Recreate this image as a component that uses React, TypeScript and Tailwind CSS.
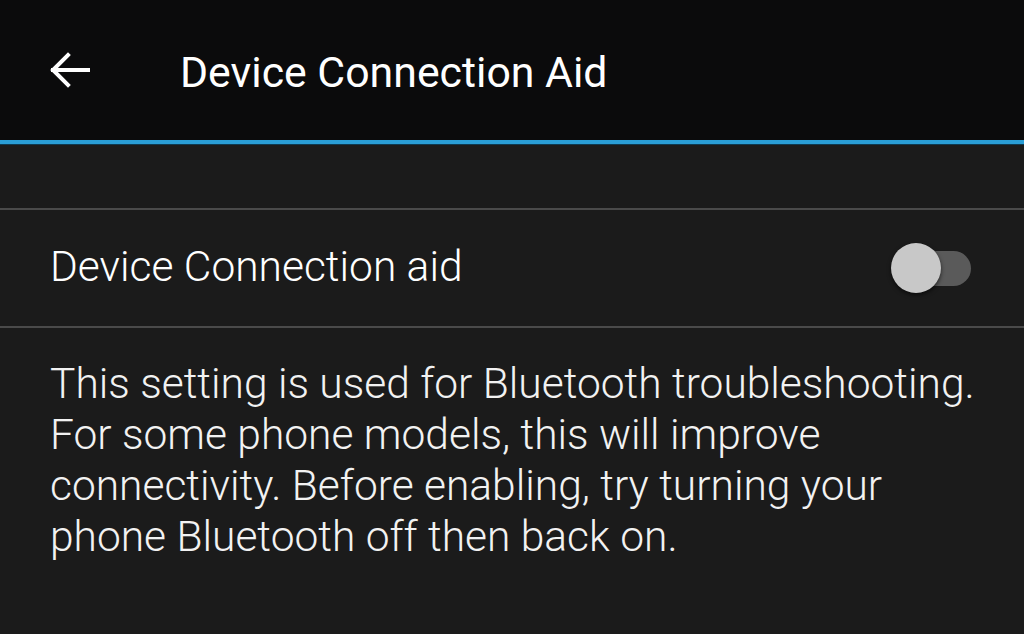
import React, { useState } from 'react';

const App: React.FC = () => {
  const [enabled, setEnabled] = useState(false);

  return (
    <div
      className="w-[1024px] h-[634px] bg-[#1b1b1b] text-white overflow-hidden"
      style={{ fontFamily: 'Roboto, "Noto Sans", sans-serif' }}
    >
      {/* Header */}
      <div className="h-[140px] bg-[#0b0b0c] flex items-center">
        <div className="w-[180px] flex items-center pl-[48px]">
          <svg width="44" height="40" viewBox="0 0 44 40" fill="none" stroke="#ffffff" strokeWidth="4" strokeLinecap="square">
            <path d="M5 20 H40" />
            <path d="M20 5 L5 20 L20 35" />
          </svg>
        </div>
        <h1 className="text-[42.8px] leading-none font-normal pt-[4px]">Device Connection Aid</h1>
      </div>
      <div className="h-[5px] bg-[#2a9ed6] border-b border-[#0f3a50]" />

      {/* Spacer section */}
      <div className="h-[63px]" />
      <div className="h-[2px] bg-[#4a4a4a]" />

      {/* Toggle row */}
      <div className="h-[116px] flex items-center justify-between pl-[50px] pr-[53px]">
        <span className="text-[42.5px] font-light leading-none pb-[2px]">Device Connection aid</span>
        <button
          onClick={() => setEnabled(!enabled)}
          className="relative w-[80px] h-[50px] flex items-center"
        >
          <span className={`absolute right-0 w-[64px] h-[35px] rounded-full ${enabled ? 'bg-[#1f6f96]' : 'bg-[#5a5a5a]'}`} />
          <span
            className={`absolute w-[50px] h-[50px] rounded-full shadow-[0_2px_4px_rgba(0,0,0,0.6)] ${enabled ? 'right-0 bg-[#2a9ed6]' : 'left-0 bg-[#c8c8c8]'}`}
          />
        </button>
      </div>
      <div className="h-[2px] bg-[#4a4a4a]" />

      {/* Description */}
      <p className="pl-[50px] pr-[20px] pt-[30px] text-[42.5px] font-light leading-[51px] text-[#f2f2f2]">
        This setting is used for Bluetooth troubleshooting. For some phone models, this will improve connectivity. Before enabling, try turning your phone Bluetooth off then back on.
      </p>
    </div>
  );
};

export default App;
